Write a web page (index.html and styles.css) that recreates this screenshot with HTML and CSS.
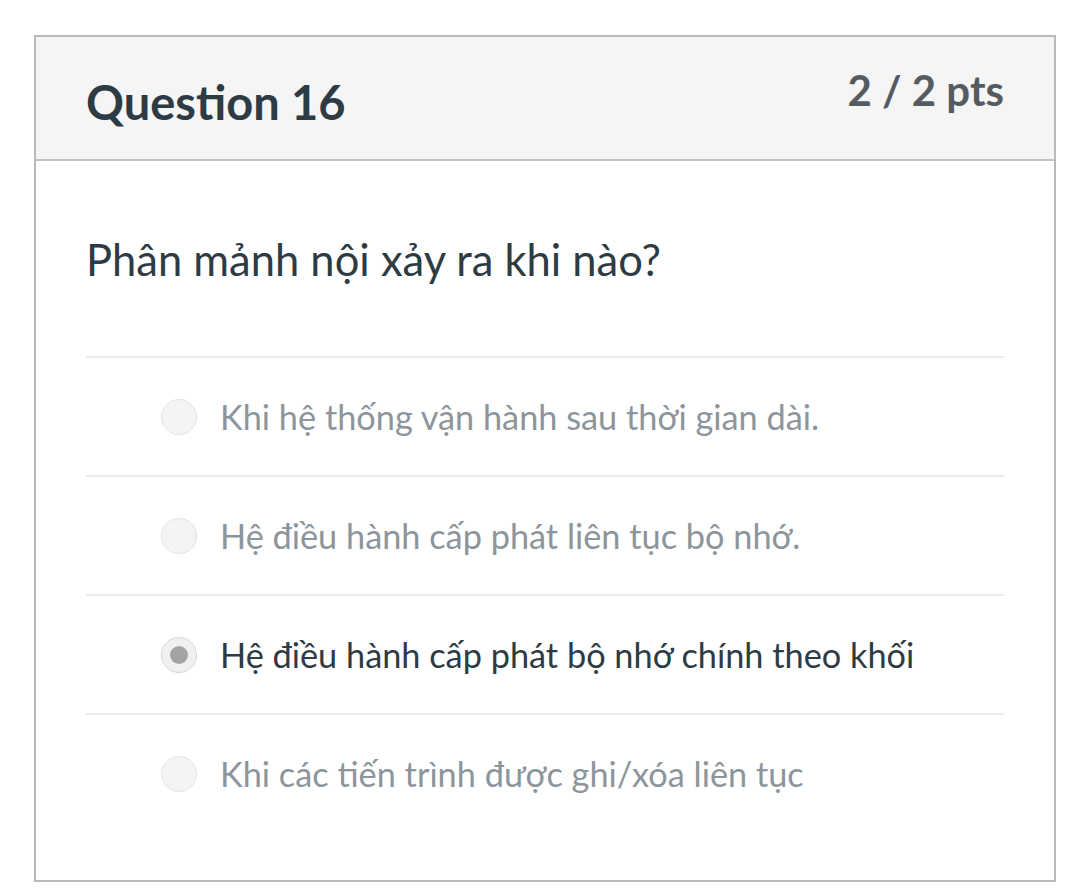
FILE: index.html
```html
<!DOCTYPE html>
<html lang="vi">
<head>
<meta charset="utf-8">
<title>Question 16</title>
<link rel="stylesheet" href="styles.css">
</head>
<body>
<div class="card">
  <div class="card-header">
    <h2 class="title">Question 16</h2>
    <div class="points">2 / 2 pts</div>
  </div>
  <div class="card-body">
    <p class="question">Phân mảnh nội xảy ra khi nào?</p>
    <div class="answers">
      <div class="answer">
        <span class="radio"></span>
        <span class="label">Khi hệ thống vận hành sau thời gian dài.</span>
      </div>
      <div class="answer">
        <span class="radio"></span>
        <span class="label">Hệ điều hành cấp phát liên tục bộ nhớ.</span>
      </div>
      <div class="answer selected">
        <span class="radio"><span class="dot"></span></span>
        <span class="label">Hệ điều hành cấp phát bộ nhớ chính theo khối</span>
      </div>
      <div class="answer">
        <span class="radio"></span>
        <span class="label">Khi các tiến trình được ghi/xóa liên tục</span>
      </div>
    </div>
  </div>
</div>
</body>
</html>
```

FILE: styles.css
```css
* { box-sizing: border-box; }

html, body {
  margin: 0;
  padding: 0;
  background: #ffffff;
}

body {
  font-family: Lato, "Noto Sans", "Liberation Sans", sans-serif;
  color: #2d3b45;
}

.card {
  margin: 35px 0 0 34px;
  width: 1022px;
  border: 2px solid #b9b9b9;
  background: #ffffff;
}

.card-header {
  height: 124px;
  background: #f5f5f5;
  border-bottom: 2px solid #c2c2c2;
  padding: 0 50px;
  display: flex;
  justify-content: space-between;
  align-items: flex-start;
}

.title {
  margin: 42px 0 0 0;
  font-size: 47px;
  line-height: 1;
  font-weight: 700;
  color: #2d3b45;
}

.points {
  margin-top: 32px;
  font-size: 42px;
  line-height: 1;
  font-weight: 700;
  color: #555b60;
}

.card-body {
  padding: 0 50px 48px 50px;
}

.question {
  margin: 77px 0 75px 0;
  height: 43px;
  font-size: 43.5px;
  line-height: 1;
  color: #2d3b45;
}

.answer {
  height: 119px;
  border-top: 2px solid #ececec;
  display: flex;
  align-items: center;
  padding-left: 75px;
}

.radio {
  width: 36px;
  height: 36px;
  border-radius: 50%;
  background: #f4f4f4;
  border: 1px solid #e3e3e3;
  display: flex;
  align-items: center;
  justify-content: center;
  flex: none;
}

.dot {
  width: 18px;
  height: 18px;
  border-radius: 50%;
  background: #a3a3a3;
}

.selected .radio {
  border-color: #d6d6d6;
  background: #f0f0f0;
}

.label {
  margin-left: 23px;
  font-size: 34.3px;
  line-height: 1.2;
  color: #8d959c;
}

.selected .label {
  color: #2d3b45;
}
```
